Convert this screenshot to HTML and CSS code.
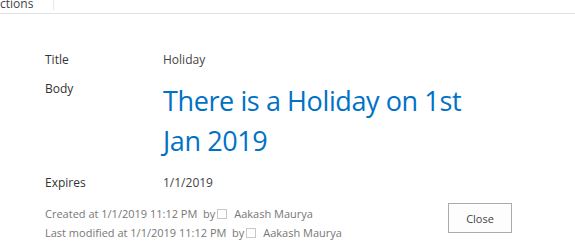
FILE: index.html
```html
<!DOCTYPE html>
<html>
<head>
<meta charset="utf-8">
<link rel="stylesheet" href="styles.css">
</head>
<body>
<div class="topbar">
  <div class="tab">ctions</div>
</div>
<div class="content">
  <div class="fields">
    <div class="label row-title">Title</div>
    <div class="value row-title">Holiday</div>
    <div class="label row-body">Body</div>
    <div class="value body-text">There is a Holiday on 1st Jan 2019</div>
    <div class="label row-exp">Expires</div>
    <div class="value row-exp">1/1/2019</div>
  </div>
  <div class="footer">
    <div class="meta">
      <div>Created at 1/1/2019 11:12 PM&nbsp; by<span class="presence"></span> Aakash Maurya</div>
      <div>Last modified at 1/1/2019 11:12 PM&nbsp; by<span class="presence"></span> Aakash Maurya</div>
    </div>
    <button class="close">Close</button>
  </div>
</div>
</body>
</html>
```
FILE: styles.css
```css
html, body {
  margin: 0;
  padding: 0;
  background: #fff;
}
body {
  font-family: "Open Sans", "Noto Sans", sans-serif;
  color: #444;
  width: 575px;
  height: 242px;
  overflow: hidden;
}
.topbar {
  height: 13px;
  border-bottom: 1px solid #e1e1e1;
  display: flex;
  overflow: hidden;
}
.tab {
  width: 54px;
  height: 13px;
  border-right: 1px solid #e8e8e8;
  font-size: 12px;
  line-height: 13px;
  margin-top: -3px;
  color: #444;
  box-sizing: border-box;
}
.content {
  padding: 37px 63px 0 45px;
}
.fields {
  display: grid;
  grid-template-columns: 118px 1fr;
  align-items: start;
}
.label {
  font-size: 12px;
  line-height: 18px;
  color: #333;
}
.value {
  font-size: 12px;
  line-height: 18px;
  color: #444;
}
.row-title {
  margin-bottom: 11px;
}
.body-text {
  font-size: 27px;
  line-height: 40px;
  letter-spacing: -0.4px;
  color: #0072c6;
  margin-top: 1px;
  width: 320px;
  font-weight: 400;
}
.row-exp {
  margin-top: 13px;
}
.footer {
  display: flex;
  justify-content: space-between;
  align-items: flex-start;
  margin-top: 12px;
}
.meta {
  font-size: 11px;
  line-height: 19px;
  color: #777;
}
.presence {
  display: inline-block;
  width: 8px;
  height: 8px;
  border: 1px solid #c8c8c8;
  margin: 0 4px 0 2px;
  vertical-align: -1px;
}
.close {
  width: 64px;
  height: 30px;
  border: 1px solid #ababab;
  background: #fdfdfd;
  font-family: "Open Sans", "Noto Sans", sans-serif;
  font-size: 11px;
  color: #444;
  padding: 0;
  margin-top: -1px;
}
```
